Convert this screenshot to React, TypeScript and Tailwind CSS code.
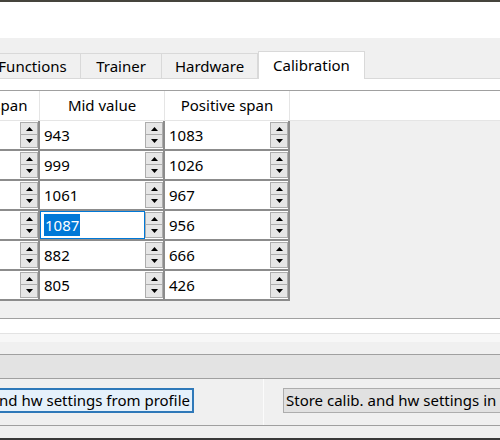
import React from "react";

const rows: [string, string, string][] = [
  ["", "943", "1083"],
  ["", "999", "1026"],
  ["", "1061", "967"],
  ["", "1087", "956"],
  ["", "882", "666"],
  ["", "805", "426"],
];

function Spin() {
  return (
    <div className="flex flex-col w-[18px] h-[28px] py-[1px] shrink-0">
      <div className="h-[13px] border border-[#adadad] bg-[#e6e6e6] flex items-center justify-center">
        <svg width="7" height="4" viewBox="0 0 7 4">
          <path d="M0 4 L3.5 0 L7 4Z" fill="#000" />
        </svg>
      </div>
      <div className="h-[13px] border border-t-0 border-[#adadad] bg-[#e6e6e6] flex items-center justify-center">
        <svg width="7" height="4" viewBox="0 0 7 4">
          <path d="M0 0 L3.5 4 L7 0Z" fill="#000" />
        </svg>
      </div>
    </div>
  );
}

function Cell({ v, sel }: { v: string; sel?: boolean }) {
  return (
    <div className="w-[125px] h-[30px] border-r-2 border-b-2 border-[#8c8c8c] bg-white flex shrink-0">
      <div
        className={
          "flex-1 flex items-center pl-[3px] " +
          (sel ? "border border-[#0078d7] pl-[2px]" : "")
        }
      >
        {sel ? (
          <span className="bg-[#0078d7] text-white leading-[22px] px-[1px]">{v}</span>
        ) : (
          <span className="px-[1px]">{v}</span>
        )}
      </div>
      <Spin />
    </div>
  );
}

export default function App() {
  return (
    <div className="w-[500px] h-[440px] overflow-hidden bg-white text-black text-[15px] font-['Noto_Sans','Open_Sans',sans-serif] flex flex-col">
      <div className="h-[2px] bg-[#45443c]" />
      <div className="h-[36px] bg-white" />
      {/* tab bar */}
      <div className="h-[40px] bg-[#f0f0f0] flex items-end">
        <div className="-ml-[16px] w-[97px] h-[25px] border border-b-0 border-[#d9d9d9] flex items-center justify-center">
          Functions
        </div>
        <div className="w-[81px] h-[25px] border border-l-0 border-b-0 border-[#d9d9d9] flex items-center justify-center">
          Trainer
        </div>
        <div className="w-[96px] h-[25px] border border-l-0 border-b-0 border-[#d9d9d9] flex items-center justify-center">
          Hardware
        </div>
        <div className="relative z-10 -mb-[1px] w-[107px] h-[28px] bg-white border border-b-0 border-[#d9d9d9] flex items-center justify-center pb-[1px]">
          Calibration
        </div>
      </div>
      <div className="h-[1px] bg-[#d9d9d9]" />
      <div className="h-[11px] bg-white" />
      {/* table */}
      <div className="h-[1px] bg-[#a0a0a0]" />
      <div className="h-[30px] bg-white flex border-b border-[#e5e5e5] -ml-[85px]">
        {["Negative span", "Mid value", "Positive span"].map((h) => (
          <div
            key={h}
            className="w-[125px] shrink-0 border-r border-[#e5e5e5] flex items-center justify-center whitespace-nowrap"
          >
            {h}
          </div>
        ))}
      </div>
      <div className="h-[197px] bg-[#f0f0f0] flex flex-col -ml-[85px]">
        {rows.map((r, i) => (
          <div key={i} className="flex">
            <Cell v={r[0]} />
            <Cell v={r[1]} sel={i === 3} />
            <Cell v={r[2]} />
          </div>
        ))}
      </div>
      <div className="h-[1px] bg-[#a0a0a0]" />
      <div className="h-[14px] bg-white" />
      <div className="h-[1px] bg-[#e3e3e3]" />
      <div className="h-[20px] bg-[#f0f0f0] border-t-[8px] border-[#f7f7f7]" />
      <div className="h-[1px] bg-[#a0a0a0]" />
      <div className="h-[23px] bg-[#e3e3e3]" />
      <div className="h-[1px] bg-[#a0a0a0]" />
      <div className="h-[46px] bg-[#f0f0f0] flex items-start pt-[9px]">
        <div className="-ml-[2px] w-[196px] h-[25px] border-2 border-[#2f79b9] bg-[#e5f1fb] flex items-center justify-end overflow-hidden whitespace-nowrap pr-[2px] shrink-0">
          Load calib. and hw settings from profile
        </div>
        <div className="ml-[69px] -mt-[9px] w-[1px] h-[46px] bg-[#fbfbfb] shrink-0" />
        <div className="ml-[19px] flex-1 h-[25px] border border-[#adadad] border-r-0 bg-[#e1e1e1] flex items-center overflow-hidden whitespace-nowrap pl-[2px]">
          Store calib. and hw settings in profile
        </div>
      </div>
      <div className="h-[1px] bg-[#a0a0a0]" />
      <div className="h-[12px] bg-[#f0f0f0]" />
      <div className="h-[2px] bg-[#3a3a3a]" />
    </div>
  );
}
